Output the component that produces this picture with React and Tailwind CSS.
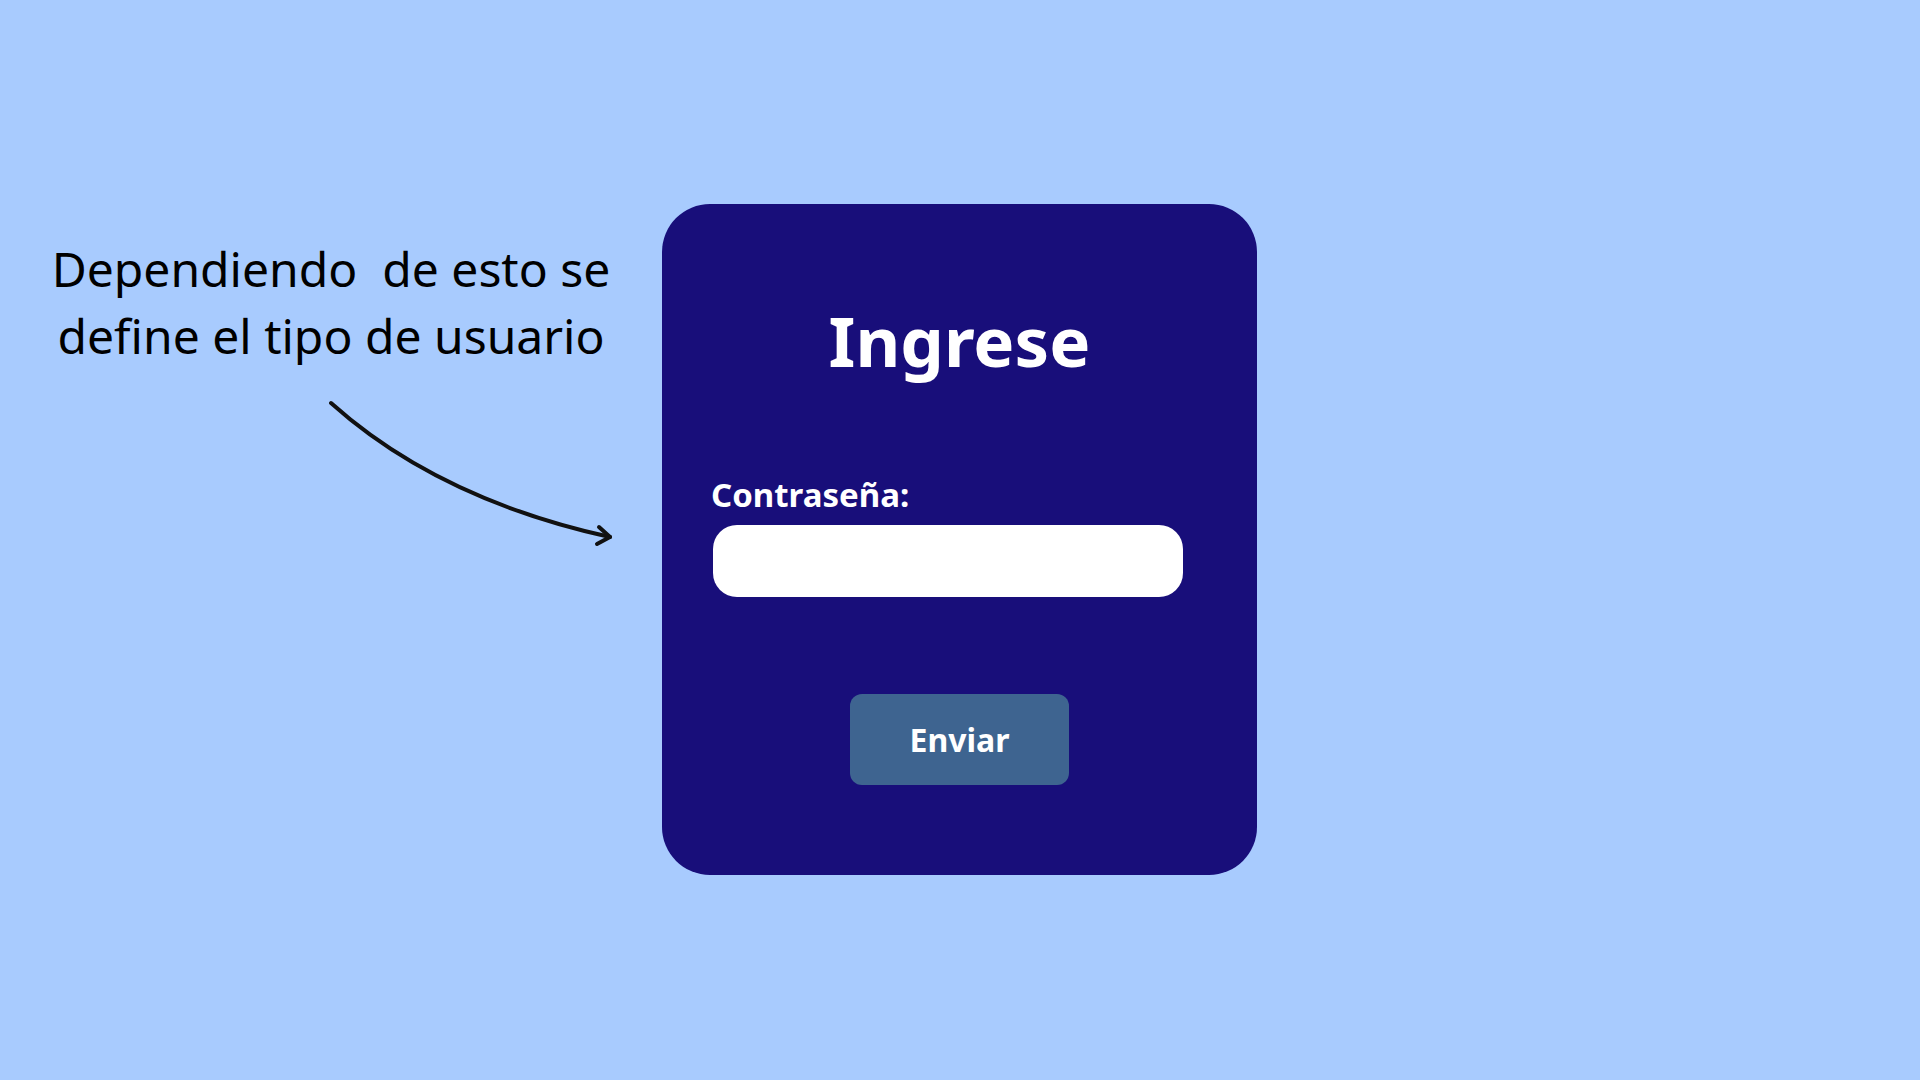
export default function App() {
  return (
    <div
      className="w-[1920px] h-[1080px] bg-[#a8cbfe] flex items-start pt-[204px] overflow-hidden"
      style={{ fontFamily: '"Noto Sans", "Open Sans", sans-serif' }}
    >
      <div className="w-[662px] shrink-0 pt-[31px] flex flex-col">
        <p className="text-center text-[48px] leading-[67px] text-black whitespace-pre">
          {"Dependiendo  de esto se\ndefine el tipo de usuario"}
        </p>
        <svg
          className="block ml-[320px] mt-[24px]"
          width="300"
          height="160"
          viewBox="0 0 300 160"
          fill="none"
        >
          <path
            d="M11 10 Q118 106 290 144"
            stroke="#111"
            strokeWidth="4"
            strokeLinecap="round"
            fill="none"
          />
          <path
            d="M279 134 L290 144 L277 151"
            stroke="#111"
            strokeWidth="4"
            strokeLinecap="round"
            strokeLinejoin="round"
            fill="none"
          />
        </svg>
      </div>
      <div className="w-[595px] h-[671px] shrink-0 bg-[#180e7a] rounded-[48px] pt-[102px] px-[49px] flex flex-col">
        <h1 className="text-center text-white font-bold text-[69px] leading-[68px]">
          Ingrese
        </h1>
        <label className="mt-[104px] text-white font-bold text-[33px] leading-[33px]">
          Contraseña:
        </label>
        <div className="mt-[14px] ml-[2px] w-[470px] h-[72px] bg-white rounded-[24px]" />
        <div className="mt-[97px] flex justify-center">
          <button className="w-[219px] h-[91px] bg-[#3e6490] rounded-[12px] text-white font-bold text-[32px] leading-none">
            Enviar
          </button>
        </div>
      </div>
    </div>
  );
}
